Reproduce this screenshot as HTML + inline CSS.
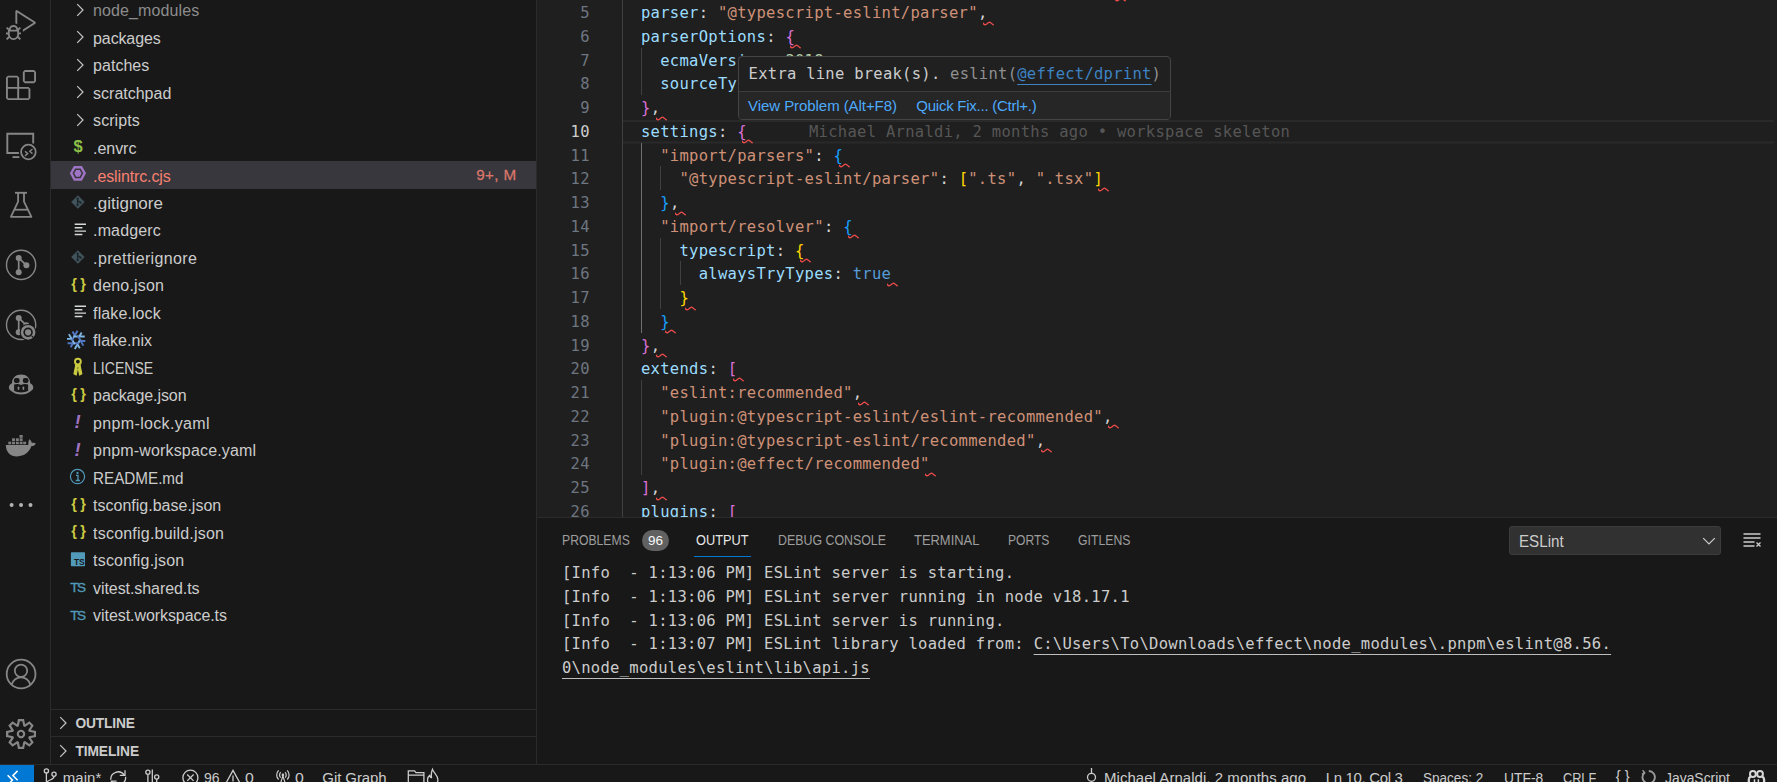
<!DOCTYPE html>
<html lang="en">
<head>
<meta charset="utf-8">
<title>.eslintrc.cjs - effect - Visual Studio Code</title>
<style>
*{box-sizing:border-box}
html,body{margin:0;padding:0}
body{width:1777px;height:782px;overflow:hidden;background:#181818;position:relative;
 font-family:"Liberation Sans",sans-serif;color:#cccccc;}
.abs{position:absolute}
/* activity bar */
#act{position:absolute;left:0;top:0;width:51px;height:764px;background:#181818;border-right:1px solid #2b2b2b}
#act svg{position:absolute;color:#868686}
/* sidebar */
#side{position:absolute;left:51px;top:0;width:485px;height:764px;background:#181818;overflow:hidden}
.row{position:absolute;left:0;width:485px;height:27.5px;line-height:27.5px;font-size:16px;color:#cccccc;white-space:nowrap}
.row.dim{color:#8c8c8c}
.row.sel{background:#37373d;color:#f88070;margin-top:-0.75px;height:28px;line-height:29px}
.row .chev{position:absolute;left:20.8px;top:5.15px;width:16px;height:16px;color:#c5c5c5}
.row.dim .chev{color:#c5c5c5}
.row .fi{position:absolute;left:15px;top:0;width:24px;height:27.5px;display:block}
.row .fi svg{position:absolute;left:0;top:0}
.row .nm{position:absolute;top:0.6px}
.row .badge{position:absolute;top:-0.9px;font-size:15.2px;color:#d8766a;-webkit-text-stroke:0.3px #d8766a}
.pane{position:absolute;left:0;width:485px;height:28px;border-top:1px solid #2b2b2b}
.pane svg{position:absolute;left:4.2px;width:16px;height:16px;color:#c5c5c5}
.pane div{position:absolute;height:20px;line-height:20px;font-weight:bold;font-size:13.75px;color:#cccccc;white-space:nowrap}
/* editor */
#ed{position:absolute;left:536px;top:0;width:1241px;height:517px;background:#1f1f1f;overflow:hidden;border-left:1px solid #2b2b2b}
#edin{position:absolute;left:-537px;top:0;width:1777px;height:517px}
.mono{font-family:"DejaVu Sans Mono","Liberation Mono",monospace;font-size:16px}
.cl{position:absolute;left:621.75px;height:23.75px;line-height:23.75px;white-space:pre;font-family:"DejaVu Sans Mono","Liberation Mono",monospace;font-size:15.5px;letter-spacing:0.293px;color:#d4d4d4;margin-top:2px}
.ln{position:absolute;left:537px;width:52.8px;text-align:right;height:23.75px;line-height:23.75px;font-family:"DejaVu Sans Mono","Liberation Mono",monospace;font-size:15.5px;letter-spacing:0.293px;color:#6e7681;margin-top:2px}
.ln.cur{color:#cccccc}
.k{color:#9cdcfe}.s{color:#ce9178}.p{color:#d4d4d4}.n{color:#b5cea8}.t{color:#569cd6}
.b1{color:#ffd700}.b2{color:#da70d6}.b3{color:#179fff}
.blame{color:#565656}
.guide{position:absolute;width:1px;background:#404040}
.guide.act{background:#707070}
.curline{position:absolute;left:623px;width:1151px;height:2px;background:#292929}
.curline2{position:absolute;left:623px;top:141px;width:1151px;height:3px;background:linear-gradient(#242424 0,#242424 33.3%,#292929 33.3%,#292929 66.6%,#242424 66.6%)}
.sq{position:absolute}
/* hover */
#hover{position:absolute;left:737.5px;top:56px;width:433.5px;height:63.5px;background:#202020;border:1px solid #454545;border-radius:4px}
#hover .msg{position:absolute;left:10.1px;top:5.9px;height:23.75px;line-height:23.75px;white-space:pre;font-family:"DejaVu Sans Mono","Liberation Mono",monospace;font-size:15.5px;letter-spacing:0.262px;color:#cccccc}
#hover .msg .src{color:#8f8f8f}
#hover .msg u{color:#3e83c3;text-decoration:underline;text-underline-offset:4.5px;text-decoration-thickness:1.2px}
#hover .bar{position:absolute;left:0;top:34px;width:431.5px;height:27.5px;border-top:1px solid #3c3c3c;background:#262626;border-radius:0 0 3px 3px;font-size:15px;color:#4daafc;line-height:27px;white-space:nowrap}
#hover .bar span{position:absolute;top:0}
/* panel */
#panel{position:absolute;left:537px;top:517px;width:1240px;height:247px;background:#181818;border-top:1px solid #2b2b2b}
.ptab{position:absolute;top:530.8px;height:20px;line-height:20px;font-size:13.75px;color:#9d9d9d;white-space:nowrap}
.ptab.act{color:#e7e7e7}
.pbadge{position:absolute;left:642px;top:529.5px;width:27px;height:21.5px;border-radius:11px;background:#616161;color:#f8f8f8;font-size:13.5px;line-height:21.5px;text-align:center}
.ol{position:absolute;left:562px;height:23.75px;line-height:23.75px;white-space:pre;font-family:"DejaVu Sans Mono","Liberation Mono",monospace;font-size:15.5px;letter-spacing:0.293px;color:#cccccc;margin-top:2px}
.ol u{text-decoration:underline;text-underline-offset:5px;text-decoration-thickness:1px;text-decoration-color:#bdbdbd;text-decoration-skip-ink:none}
#sel{position:absolute;left:1509px;top:526px;width:212px;height:29px;background:#313131;border:1px solid #3c3c3c;border-radius:3px;font-size:16.5px;color:#cccccc;line-height:27px}
#sel span{position:absolute;top:0.5px}
/* status */
#status{position:absolute;left:0;top:764px;width:1777px;height:18px;background:#181818;border-top:1px solid #2b2b2b;overflow:hidden;font-size:15px;color:#cccccc;white-space:nowrap}
#status .it{position:absolute;top:-1.3px;height:27.5px;line-height:27.5px}
#sticons{left:0;top:-1px}
#status svg{position:absolute}
#remote{position:absolute;left:0;top:-0.5px;width:33.8px;height:20px;background:#0078d4}
</style>
</head>
<body>
<div id="act">
<svg style="left:6px;top:9.5px;width:30px;height:30px" viewBox="0 0 24 24" fill="currentColor"><path d="M10.94 13.5l-1.32 1.32a3.73 3.73 0 0 0-7.24 0L1.06 13.5 0 14.56l1.72 1.72-.22.22V18H0v1.5h1.5v.08c.077.489.214.966.41 1.42L0 22.94 1.06 24l1.65-1.65A4.308 4.308 0 0 0 6 24a4.31 4.31 0 0 0 3.29-1.65L10.94 24 12 22.94 10.09 21c.198-.464.336-.951.41-1.45v-.1H12V18h-1.5v-1.5l-.22-.22L12 14.56l-1.06-1.06zM6 13.5a2.25 2.25 0 0 1 2.25 2.25h-4.500A2.250 2.250 0 0 1 6 13.500zm3 6a3.330 3.330 0 0 1-3 3 3.330 3.330 0 0 1-3-3v-2.250h6v2.250zm14.760-9.900v1.260L13.500 17.370V15.600l8.500-5.370L9 2v9.460a5.070 5.070 0 0 0-1.500-.720V.630L8.640 0l15.120 9.600z"/></svg>
<svg style="left:6px;top:70px;width:30px;height:30px" viewBox="0 0 24 24" fill="currentColor"><path fill-rule="evenodd" clip-rule="evenodd" d="M13.5 1.5L15 0h7.5L24 1.5V9l-1.5 1.5H15L13.5 9V1.5zm1.5 0V9h7.5V1.5H15zM0 15V6l1.500-1.500H9L10.500 6v7.500H18l1.500 1.500v7.500L18 24H1.500L0 22.500V15zm9-1.500V6H1.500v7.500H9zM9 15H1.500v7.500H9V15zm1.500 7.500H18V15h-7.500v7.500z"/></svg>
<svg style="left:0;top:0;width:50px;height:764px" viewBox="0 0 50 764" fill="none" stroke="currentColor"><path d="M18.9 153H7.3V133.7H33.2V143.6" stroke-width="1.9"/><path d="M12.5 157.1H19.4" stroke-width="1.9"/><circle cx="28.4" cy="152" r="7.3" stroke-width="1.8"/><path d="M25 151.3l2.7 2.3-2.700 2.300M32.500 149l-2.700 2.300 2.700 2.300" stroke-width="1.400"/><path d="M15 192.800H27" stroke-width="1.900"/><path d="M18.100 192.800V201.600L10.900 216.800H31.400L24 201.600V192.800" stroke-width="1.800" stroke-linejoin="round"/><path d="M14.600 209.700H27.700" stroke-width="1.800"/><circle cx="21.100" cy="264.900" r="14.600" stroke-width="1.400"/><path d="M18.700 257.900V272.300M18.700 257.900L26.400 265.300" stroke-width="1.700"/><g fill="currentColor" stroke="none"><circle cx="18.700" cy="257.900" r="3"/><circle cx="18.700" cy="272.300" r="3"/><circle cx="26.400" cy="265.300" r="3"/></g><circle cx="21.100" cy="324.900" r="14.600" stroke-width="1.400"/><path d="M18.700 317.900V332.300M18.700 317.900L26.400 325.300" stroke-width="1.700"/><g fill="currentColor" stroke="none"><circle cx="18.700" cy="317.900" r="3"/><circle cx="18.700" cy="332.300" r="3"/><circle cx="26.400" cy="325.300" r="3"/></g><circle cx="28.100" cy="332.300" r="8.400" fill="#181818" stroke="none"/><circle cx="28.100" cy="332.300" r="6.050" stroke-width="2.600"/><circle cx="28.100" cy="332.300" r="3.100" fill="currentColor" stroke="none"/><path d="M31.700 335.900l1.800 1.800" stroke="#181818" stroke-width="1.200"/><g stroke="none"><path fill="currentColor" d="M21.100 374.600c-5.400 0-8.800 2.900-9.100 8.600-1.900.900-3.100 2.300-3.100 4.300 0 1.600.900 2.700 2.300 3.500 2.800 2.300 6.100 3.600 9.900 3.600s7.100-1.300 9.900-3.600c1.400-.800 2.300-1.900 2.300-3.500 0-2-1.200-3.400-3.100-4.300-.300-5.700-3.700-8.600-9.100-8.600z"/><rect x="13.900" y="377.900" width="5.700" height="5.100" rx="2" fill="#181818"/><rect x="22.800" y="377.900" width="5.700" height="5.100" rx="2" fill="#181818"/><path fill="#181818" d="M14.100 384.400c2.300-.800 4.900-.700 7 .500 2.100-1.200 4.700-1.300 7-.500v6.400c-2 1.100-4.400 1.700-7 1.700s-5-.600-7-1.700z"/><rect x="17.700" y="386.400" width="1.600" height="3.700" rx=".8" fill="currentColor"/><rect x="22.600" y="386.400" width="1.600" height="3.700" rx=".8" fill="currentColor"/></g><g stroke="none" fill="currentColor"><path d="M5.750 444.900H28.200c.300-2 .100-4 1.200-5.700 1.300 1 2.200 2.300 2.500 3.700 1.400-.500 2.800-.300 3.900.500-.700 1.600-2.200 2.600-4.300 2.700-2.400 6.300-7.100 10.300-14.500 10.300-6.900 0-10.800-4.200-11.250-11.500z"/><g opacity=".92"><rect x="8.3" y="441.700" width="2.900" height="2.600"/><rect x="12.05" y="441.700" width="2.900" height="2.600"/><rect x="15.9" y="441.700" width="2.900" height="2.600"/><rect x="19.7" y="441.700" width="2.900" height="2.600"/><rect x="23.2" y="441.700" width="2.900" height="2.600"/><rect x="12.05" y="438.300" width="2.900" height="2.700"/><rect x="15.9" y="438.300" width="2.900" height="2.700"/><rect x="19.7" y="438.300" width="2.900" height="2.700"/><rect x="19.500" y="435" width="3.200" height="2.800"/></g></g><g stroke="none" fill="#b4b4b4"><circle cx="11.600" cy="504.900" r="2"/><circle cx="21.050" cy="504.900" r="2"/><circle cx="30.500" cy="504.900" r="2"/></g><circle cx="21.100" cy="674" r="14.400" stroke-width="1.800"/><circle cx="21" cy="670.800" r="6.200" stroke-width="1.800"/><path d="M11.600 684.600c1.600-4.600 5.200-7.300 9.400-7.300s7.800 2.700 9.400 7.300" stroke-width="1.800"/></svg>
<svg style="left:6px;top:719.1px;width:30px;height:30px" viewBox="0 0 24 24" fill="currentColor"><path fill-rule="evenodd" clip-rule="evenodd" d="M19.85 8.75l4.15.83v4.84l-4.15.83 2.35 3.52-3.43 3.43-3.52-2.35-.83 4.15H9.580l-.830-4.150-3.520 2.350-3.430-3.430 2.350-3.520L0 14.420V9.580l4.150-.830L1.800 5.230 5.230 1.800l3.520 2.350L9.580 0h4.840l.830 4.150 3.520-2.350 3.430 3.430-2.350 3.520zm-1.570 5.070l4-.810v-2l-4-.810-.540-1.300 2.290-3.430-1.430-1.430-3.430 2.290-1.300-.540-.810-4h-2l-.810 4-1.300.540-3.430-2.290-1.430 1.430L6.380 8.900l-.540 1.300-4 .810v2l4 .810.540 1.300-2.290 3.430 1.430 1.430 3.430-2.290 1.300.540.810 4h2l.810-4 1.300-.540 3.430 2.290 1.430-1.430-2.290-3.430.540-1.300zm-8.186-4.672A3.430 3.430 0 0 1 12 8.570 3.440 3.440 0 0 1 15.430 12a3.430 3.430 0 1 1-5.336-2.852zm.956 4.274c.281.188.612.288.950.288A1.700 1.700 0 0 0 13.710 12a1.710 1.710 0 1 0-2.660 1.422z"/></svg>
</div>
<div id="side">
<div class="row dim" style="top:-3.25px"><svg class="chev" viewBox="0 0 16 16"><path d="M5.2 2.2 L11 8 L5.2 13.8" fill="none" stroke="currentColor" stroke-width="1.2"/></svg><span class="nm" style="left:42.10px;letter-spacing:0.103px;">node_modules</span></div>
<div class="row" style="top:24.25px"><svg class="chev" viewBox="0 0 16 16"><path d="M5.2 2.2 L11 8 L5.2 13.8" fill="none" stroke="currentColor" stroke-width="1.2"/></svg><span class="nm" style="left:42.10px;letter-spacing:-0.129px;">packages</span></div>
<div class="row" style="top:51.75px"><svg class="chev" viewBox="0 0 16 16"><path d="M5.2 2.2 L11 8 L5.2 13.8" fill="none" stroke="currentColor" stroke-width="1.2"/></svg><span class="nm" style="left:42.10px;letter-spacing:0.026px;">patches</span></div>
<div class="row" style="top:79.25px"><svg class="chev" viewBox="0 0 16 16"><path d="M5.2 2.2 L11 8 L5.2 13.8" fill="none" stroke="currentColor" stroke-width="1.2"/></svg><span class="nm" style="left:42.10px;letter-spacing:-0.007px;">scratchpad</span></div>
<div class="row" style="top:106.75px"><svg class="chev" viewBox="0 0 16 16"><path d="M5.2 2.2 L11 8 L5.2 13.8" fill="none" stroke="currentColor" stroke-width="1.2"/></svg><span class="nm" style="left:42.10px;letter-spacing:0.061px;">scripts</span></div>
<div class="row" style="top:134.25px"><span class="fi"><svg width="24" height="27.5" viewBox="0 0 24 27.5"><text x="7.6" y="17.6" font-family="Liberation Sans,sans-serif" font-weight="bold" font-size="16.5" fill="#8dc149">$</text></svg></span><span class="nm" style="left:42.10px;letter-spacing:-0.056px;">.envrc</span></div>
<div class="row sel" style="top:161.75px"><span class="fi"><svg width="24" height="27.5" viewBox="0 0 24 27.5"><polygon points="3.80,12.30 7.85,4.95 15.95,4.95 20.00,12.30 15.95,19.65 7.85,19.65" fill="#a074c4"/><polygon points="7.40,12.30 9.65,8.20 14.15,8.20 16.40,12.30 14.15,16.40 9.65,16.40" fill="none" stroke="#37373d" stroke-width="1.5"/></svg></span><span class="nm" style="left:42.10px;letter-spacing:-0.127px;">.eslintrc.cjs</span><span class="badge" style="left:425.30px;letter-spacing:0.370px;">9+, M</span></div>
<div class="row" style="top:189.25px"><span class="fi"><svg width="24" height="27.5" viewBox="0 0 24 27.5"><path d="M11.9 6.2 L18.6 12.95 L11.9 19.7 L5.2 12.95 Z" fill="#41535b"/><path d="M11.6 9.600v6.400M11.800 11.600l2.600 2" stroke="#1c2428" stroke-width="1.300" fill="none"/><circle cx="11.600" cy="9.600" r="1.100" fill="#1c2428"/><circle cx="11.600" cy="16.200" r="1.100" fill="#1c2428"/><circle cx="14.600" cy="13.700" r="1.100" fill="#1c2428"/></svg></span><span class="nm" style="left:42.10px;transform:scaleX(1.0619);transform-origin:0 50%;">.gitignore</span></div>
<div class="row" style="top:216.75px"><span class="fi"><svg width="24" height="27.5" viewBox="0 0 24 27.5"><path d="M8.700 7.300h11.300M8.700 10.700h7.700M8.700 14.100h11.300M8.700 17.500h7.700" stroke="#d4d7d6" stroke-width="1.400"/></svg></span><span class="nm" style="left:42.10px;letter-spacing:0.128px;">.madgerc</span></div>
<div class="row" style="top:244.25px"><span class="fi"><svg width="24" height="27.5" viewBox="0 0 24 27.5"><path d="M11.9 6.2 L18.6 12.95 L11.9 19.7 L5.2 12.95 Z" fill="#41535b"/><path d="M11.6 9.600v6.400M11.800 11.600l2.600 2" stroke="#1c2428" stroke-width="1.300" fill="none"/><circle cx="11.600" cy="9.600" r="1.100" fill="#1c2428"/><circle cx="11.600" cy="16.200" r="1.100" fill="#1c2428"/><circle cx="14.600" cy="13.700" r="1.100" fill="#1c2428"/></svg></span><span class="nm" style="left:42.10px;letter-spacing:0.363px;">.prettierignore</span></div>
<div class="row" style="top:271.75px"><span class="fi"><svg width="24" height="27.5" viewBox="0 0 24 27.5"><text x="5.300" y="16.800" font-family="Liberation Sans,sans-serif" font-weight="bold" font-size="14.500" fill="#cbcb41" letter-spacing="3.300">{}</text></svg></span><span class="nm" style="left:42.10px;letter-spacing:0.189px;">deno.json</span></div>
<div class="row" style="top:299.25px"><span class="fi"><svg width="24" height="27.5" viewBox="0 0 24 27.5"><path d="M8.700 7.300h11.300M8.700 10.700h7.700M8.700 14.100h11.300M8.700 17.500h7.700" stroke="#d4d7d6" stroke-width="1.400"/></svg></span><span class="nm" style="left:42.10px;letter-spacing:0.100px;">flake.lock</span></div>
<div class="row" style="top:326.75px"><span class="fi"><svg width="24" height="27.5" viewBox="0 0 24 27.5"><g fill="none" stroke-width="1.9"><path d="M14.59 12.00L8.79 22.05M11.49 17.37L13.79 21.35" stroke="#7eb6e0"/><path d="M13.15 16.30L1.55 16.30M6.95 16.30L4.65 20.28" stroke="#5277c3"/><path d="M8.71 17.20L2.91 7.15M5.61 11.83L1.01 11.83" stroke="#7eb6e0"/><path d="M5.71 13.80L11.51 3.75M8.81 8.43L6.51 4.45" stroke="#5277c3"/><path d="M7.15 9.50L18.75 9.50M13.35 9.50L15.65 5.52" stroke="#7eb6e0"/><path d="M11.59 8.60L17.39 18.65M14.69 13.97L19.29 13.97" stroke="#5277c3"/></g></svg></span><span class="nm" style="left:42.10px;letter-spacing:0.025px;">flake.nix</span></div>
<div class="row" style="top:354.25px"><span class="fi"><svg width="24" height="27.5" viewBox="0 0 24 27.5"><circle cx="11.900" cy="7.600" r="2.900" fill="none" stroke="#cbcb41" stroke-width="2"/><path d="M9.900 10.600L8 19.800l2.200 1.200 1.100-5.600zM13.900 10.600l1.900 9.200-2.200 1.200-1.100-5.600z" fill="#cbcb41" stroke="#cbcb41" stroke-width="1.200" stroke-linejoin="round"/><path d="M9.600 10.200h4.600v3.400h-4.600z" fill="#cbcb41"/></svg></span><span class="nm" style="left:42.10px;transform:scaleX(0.8792);transform-origin:0 50%;">LICENSE</span></div>
<div class="row" style="top:381.75px"><span class="fi"><svg width="24" height="27.5" viewBox="0 0 24 27.5"><text x="5.300" y="16.800" font-family="Liberation Sans,sans-serif" font-weight="bold" font-size="14.500" fill="#cbcb41" letter-spacing="3.300">{}</text></svg></span><span class="nm" style="left:42.10px;letter-spacing:-0.072px;">package.json</span></div>
<div class="row" style="top:409.25px"><span class="fi"><svg width="24" height="27.5" viewBox="0 0 24 27.5"><text x="8.500" y="19.200" font-family="Liberation Sans,sans-serif" font-weight="bold" font-style="italic" font-size="18.500" fill="#a074c4">!</text></svg></span><span class="nm" style="left:42.10px;letter-spacing:0.336px;">pnpm-lock.yaml</span></div>
<div class="row" style="top:436.75px"><span class="fi"><svg width="24" height="27.5" viewBox="0 0 24 27.5"><text x="8.500" y="19.200" font-family="Liberation Sans,sans-serif" font-weight="bold" font-style="italic" font-size="18.500" fill="#a074c4">!</text></svg></span><span class="nm" style="left:42.10px;letter-spacing:0.163px;">pnpm-workspace.yaml</span></div>
<div class="row" style="top:464.25px"><span class="fi"><svg width="24" height="27.5" viewBox="0 0 24 27.5"><circle cx="11.500" cy="12.550" r="7.100" fill="none" stroke="#519aba" stroke-width="1.200"/><path d="M10 11.300h2v5M9.700 16.500h4.200" stroke="#519aba" stroke-width="1.300" fill="none"/><circle cx="11.500" cy="8.900" r="1.100" fill="#519aba"/></svg></span><span class="nm" style="left:42.10px;transform:scaleX(0.9514);transform-origin:0 50%;">README.md</span></div>
<div class="row" style="top:491.75px"><span class="fi"><svg width="24" height="27.5" viewBox="0 0 24 27.5"><text x="5.300" y="16.800" font-family="Liberation Sans,sans-serif" font-weight="bold" font-size="14.500" fill="#cbcb41" letter-spacing="3.300">{}</text></svg></span><span class="nm" style="left:42.10px;letter-spacing:0.001px;">tsconfig.base.json</span></div>
<div class="row" style="top:519.25px"><span class="fi"><svg width="24" height="27.5" viewBox="0 0 24 27.5"><text x="5.300" y="16.800" font-family="Liberation Sans,sans-serif" font-weight="bold" font-size="14.500" fill="#cbcb41" letter-spacing="3.300">{}</text></svg></span><span class="nm" style="left:42.10px;letter-spacing:0.206px;">tsconfig.build.json</span></div>
<div class="row" style="top:546.75px"><span class="fi"><svg width="24" height="27.5" viewBox="0 0 24 27.5"><rect x="4.900" y="5.250" width="14.100" height="14" rx=".8" fill="#519aba"/><text x="8" y="18.300" font-family="Liberation Sans,sans-serif" font-weight="bold" font-size="8.500" fill="#181818" letter-spacing="-.300">TS</text></svg></span><span class="nm" style="left:42.10px;letter-spacing:0.180px;">tsconfig.json</span></div>
<div class="row" style="top:574.25px"><span class="fi"><svg width="24" height="27.5" viewBox="0 0 24 27.5"><text x="4.300" y="17.750" font-family="Liberation Sans,sans-serif" font-size="13.600" fill="#519aba" stroke="#519aba" stroke-width=".350" letter-spacing="-1.700">TS</text></svg></span><span class="nm" style="left:42.10px;letter-spacing:-0.074px;">vitest.shared.ts</span></div>
<div class="row" style="top:601.75px"><span class="fi"><svg width="24" height="27.5" viewBox="0 0 24 27.5"><text x="4.300" y="17.750" font-family="Liberation Sans,sans-serif" font-size="13.600" fill="#519aba" stroke="#519aba" stroke-width=".350" letter-spacing="-1.700">TS</text></svg></span><span class="nm" style="left:42.10px;letter-spacing:-0.070px;">vitest.workspace.ts</span></div>
<div class="pane" style="top:709px"><svg viewBox="0 0 16 16" style="top:5.00px"><path d="M5.2 2.2 L11 8 L5.2 13.8" fill="none" stroke="currentColor" stroke-width="1.2"/></svg><div style="left:24.40px;letter-spacing:-0.143px;top:4.26px">OUTLINE</div></div>
<div class="pane" style="top:736px"><svg viewBox="0 0 16 16" style="top:5.60px"><path d="M5.2 2.2 L11 8 L5.2 13.8" fill="none" stroke="currentColor" stroke-width="1.2"/></svg><div style="left:24.40px;letter-spacing:-0.067px;top:4.86px">TIMELINE</div></div>
</div>
<div id="ed"><div id="edin">
<div class="curline" style="top:120px"></div><div class="curline2"></div>
<div class="guide" style="left:622px;top:-23.62px;height:570.00px"></div>
<div class="guide" style="left:641px;top:47.62px;height:47.50px"></div>
<div class="guide act" style="left:641px;top:142.62px;height:190.00px"></div>
<div class="guide" style="left:660px;top:166.38px;height:23.75px"></div>
<div class="guide" style="left:660px;top:237.62px;height:71.25px"></div>
<div class="guide" style="left:680px;top:261.38px;height:23.75px"></div>
<div class="guide" style="left:641px;top:380.12px;height:95.00px"></div>
<svg class="sq" style="left:1115.20px;top:-3.25px" width="11" height="5" viewBox="0 0 11 5"><path d="M0.3 2.2 C1 4 2.6 4.3 3.9 2.9 S6.3 0.5 7.4 1.4 S9.3 3.3 10.3 3.8" fill="none" stroke="#f14c4c" stroke-width="1.35" stroke-linecap="round"/></svg>
<div class="ln" style="top:0.125px">5</div>
<div class="cl" style="top:0.125px"><span class="k">  parser</span><span class="p">: </span><span class="s">&quot;@typescript-eslint/parser&quot;</span><span class="p">,</span></div>
<svg class="sq" style="left:982.90px;top:20.50px" width="11" height="5" viewBox="0 0 11 5"><path d="M0.3 2.2 C1 4 2.6 4.3 3.9 2.9 S6.3 0.5 7.4 1.4 S9.3 3.3 10.3 3.8" fill="none" stroke="#f14c4c" stroke-width="1.35" stroke-linecap="round"/></svg>
<div class="ln" style="top:23.875px">6</div>
<div class="cl" style="top:23.875px"><span class="k">  parserOptions</span><span class="p">: </span><span class="b2">{</span></div>
<svg class="sq" style="left:790.40px;top:44.25px" width="11" height="5" viewBox="0 0 11 5"><path d="M0.3 2.2 C1 4 2.6 4.3 3.9 2.9 S6.3 0.5 7.4 1.4 S9.3 3.3 10.3 3.8" fill="none" stroke="#f14c4c" stroke-width="1.35" stroke-linecap="round"/></svg>
<div class="ln" style="top:47.625px">7</div>
<div class="cl" style="top:47.625px"><span class="k">    ecmaVersion</span><span class="p">: </span><span class="n">2018</span><span class="p">,</span></div>
<svg class="sq" style="left:828.90px;top:68.00px" width="11" height="5" viewBox="0 0 11 5"><path d="M0.3 2.2 C1 4 2.6 4.3 3.9 2.9 S6.3 0.5 7.4 1.4 S9.3 3.3 10.3 3.8" fill="none" stroke="#f14c4c" stroke-width="1.35" stroke-linecap="round"/></svg>
<div class="ln" style="top:71.375px">8</div>
<div class="cl" style="top:71.375px"><span class="k">    sourceType</span><span class="p">: </span><span class="s">&quot;module&quot;</span></div>
<svg class="sq" style="left:848.15px;top:91.75px" width="11" height="5" viewBox="0 0 11 5"><path d="M0.3 2.2 C1 4 2.6 4.3 3.9 2.9 S6.3 0.5 7.4 1.4 S9.3 3.3 10.3 3.8" fill="none" stroke="#f14c4c" stroke-width="1.35" stroke-linecap="round"/></svg>
<div class="ln" style="top:95.125px">9</div>
<div class="cl" style="top:95.125px"><span class="b2">  }</span><span class="p">,</span></div>
<svg class="sq" style="left:655.65px;top:115.50px" width="11" height="5" viewBox="0 0 11 5"><path d="M0.3 2.2 C1 4 2.6 4.3 3.9 2.9 S6.3 0.5 7.4 1.4 S9.3 3.3 10.3 3.8" fill="none" stroke="#f14c4c" stroke-width="1.35" stroke-linecap="round"/></svg>
<div class="ln cur" style="top:118.875px">10</div>
<div class="cl" style="top:118.875px"><span class="k">  settings</span><span class="p">: </span><span class="b2">{</span></div>
<svg class="sq" style="left:742.27px;top:139.25px" width="11" height="5" viewBox="0 0 11 5"><path d="M0.3 2.2 C1 4 2.6 4.3 3.9 2.9 S6.3 0.5 7.4 1.4 S9.3 3.3 10.3 3.8" fill="none" stroke="#f14c4c" stroke-width="1.35" stroke-linecap="round"/></svg>
<div class="ln" style="top:142.625px">11</div>
<div class="cl" style="top:142.625px"><span class="s">    &quot;import/parsers&quot;</span><span class="p">: </span><span class="b3">{</span></div>
<svg class="sq" style="left:838.52px;top:163.00px" width="11" height="5" viewBox="0 0 11 5"><path d="M0.3 2.2 C1 4 2.6 4.3 3.9 2.9 S6.3 0.5 7.4 1.4 S9.3 3.3 10.3 3.8" fill="none" stroke="#f14c4c" stroke-width="1.35" stroke-linecap="round"/></svg>
<div class="ln" style="top:166.375px">12</div>
<div class="cl" style="top:166.375px"><span class="s">      &quot;@typescript-eslint/parser&quot;</span><span class="p">: </span><span class="b1">[</span><span class="s">&quot;.ts&quot;</span><span class="p">, </span><span class="s">&quot;.tsx&quot;</span><span class="b1">]</span></div>
<svg class="sq" style="left:1098.40px;top:186.75px" width="11" height="5" viewBox="0 0 11 5"><path d="M0.3 2.2 C1 4 2.6 4.3 3.9 2.9 S6.3 0.5 7.4 1.4 S9.3 3.3 10.3 3.8" fill="none" stroke="#f14c4c" stroke-width="1.35" stroke-linecap="round"/></svg>
<div class="ln" style="top:190.125px">13</div>
<div class="cl" style="top:190.125px"><span class="b3">    }</span><span class="p">,</span></div>
<svg class="sq" style="left:674.90px;top:210.50px" width="11" height="5" viewBox="0 0 11 5"><path d="M0.3 2.2 C1 4 2.6 4.3 3.9 2.9 S6.3 0.5 7.4 1.4 S9.3 3.3 10.3 3.8" fill="none" stroke="#f14c4c" stroke-width="1.35" stroke-linecap="round"/></svg>
<div class="ln" style="top:213.875px">14</div>
<div class="cl" style="top:213.875px"><span class="s">    &quot;import/resolver&quot;</span><span class="p">: </span><span class="b3">{</span></div>
<svg class="sq" style="left:848.15px;top:234.25px" width="11" height="5" viewBox="0 0 11 5"><path d="M0.3 2.2 C1 4 2.6 4.3 3.9 2.9 S6.3 0.5 7.4 1.4 S9.3 3.3 10.3 3.8" fill="none" stroke="#f14c4c" stroke-width="1.35" stroke-linecap="round"/></svg>
<div class="ln" style="top:237.625px">15</div>
<div class="cl" style="top:237.625px"><span class="k">      typescript</span><span class="p">: </span><span class="b1">{</span></div>
<svg class="sq" style="left:800.02px;top:258.00px" width="11" height="5" viewBox="0 0 11 5"><path d="M0.3 2.2 C1 4 2.6 4.3 3.9 2.9 S6.3 0.5 7.4 1.4 S9.3 3.3 10.3 3.8" fill="none" stroke="#f14c4c" stroke-width="1.35" stroke-linecap="round"/></svg>
<div class="ln" style="top:261.375px">16</div>
<div class="cl" style="top:261.375px"><span class="k">        alwaysTryTypes</span><span class="p">: </span><span class="t">true</span></div>
<svg class="sq" style="left:886.65px;top:281.75px" width="11" height="5" viewBox="0 0 11 5"><path d="M0.3 2.2 C1 4 2.6 4.3 3.9 2.9 S6.3 0.5 7.4 1.4 S9.3 3.3 10.3 3.8" fill="none" stroke="#f14c4c" stroke-width="1.35" stroke-linecap="round"/></svg>
<div class="ln" style="top:285.125px">17</div>
<div class="cl" style="top:285.125px"><span class="b1">      }</span></div>
<svg class="sq" style="left:684.52px;top:305.50px" width="11" height="5" viewBox="0 0 11 5"><path d="M0.3 2.2 C1 4 2.6 4.3 3.9 2.9 S6.3 0.5 7.4 1.4 S9.3 3.3 10.3 3.8" fill="none" stroke="#f14c4c" stroke-width="1.35" stroke-linecap="round"/></svg>
<div class="ln" style="top:308.875px">18</div>
<div class="cl" style="top:308.875px"><span class="b3">    }</span></div>
<svg class="sq" style="left:665.27px;top:329.25px" width="11" height="5" viewBox="0 0 11 5"><path d="M0.3 2.2 C1 4 2.6 4.3 3.9 2.9 S6.3 0.5 7.4 1.4 S9.3 3.3 10.3 3.8" fill="none" stroke="#f14c4c" stroke-width="1.35" stroke-linecap="round"/></svg>
<div class="ln" style="top:332.625px">19</div>
<div class="cl" style="top:332.625px"><span class="b2">  }</span><span class="p">,</span></div>
<svg class="sq" style="left:655.65px;top:353.00px" width="11" height="5" viewBox="0 0 11 5"><path d="M0.3 2.2 C1 4 2.6 4.3 3.9 2.9 S6.3 0.5 7.4 1.4 S9.3 3.3 10.3 3.8" fill="none" stroke="#f14c4c" stroke-width="1.35" stroke-linecap="round"/></svg>
<div class="ln" style="top:356.375px">20</div>
<div class="cl" style="top:356.375px"><span class="k">  extends</span><span class="p">: </span><span class="b2">[</span></div>
<svg class="sq" style="left:732.65px;top:376.75px" width="11" height="5" viewBox="0 0 11 5"><path d="M0.3 2.2 C1 4 2.6 4.3 3.9 2.9 S6.3 0.5 7.4 1.4 S9.3 3.3 10.3 3.8" fill="none" stroke="#f14c4c" stroke-width="1.35" stroke-linecap="round"/></svg>
<div class="ln" style="top:380.125px">21</div>
<div class="cl" style="top:380.125px"><span class="s">    &quot;eslint:recommended&quot;</span><span class="p">,</span></div>
<svg class="sq" style="left:857.77px;top:400.50px" width="11" height="5" viewBox="0 0 11 5"><path d="M0.3 2.2 C1 4 2.6 4.3 3.9 2.9 S6.3 0.5 7.4 1.4 S9.3 3.3 10.3 3.8" fill="none" stroke="#f14c4c" stroke-width="1.35" stroke-linecap="round"/></svg>
<div class="ln" style="top:403.875px">22</div>
<div class="cl" style="top:403.875px"><span class="s">    &quot;plugin:@typescript-eslint/eslint-recommended&quot;</span><span class="p">,</span></div>
<svg class="sq" style="left:1108.03px;top:424.25px" width="11" height="5" viewBox="0 0 11 5"><path d="M0.3 2.2 C1 4 2.6 4.3 3.9 2.9 S6.3 0.5 7.4 1.4 S9.3 3.3 10.3 3.8" fill="none" stroke="#f14c4c" stroke-width="1.35" stroke-linecap="round"/></svg>
<div class="ln" style="top:427.625px">23</div>
<div class="cl" style="top:427.625px"><span class="s">    &quot;plugin:@typescript-eslint/recommended&quot;</span><span class="p">,</span></div>
<svg class="sq" style="left:1040.65px;top:448.00px" width="11" height="5" viewBox="0 0 11 5"><path d="M0.3 2.2 C1 4 2.6 4.3 3.9 2.9 S6.3 0.5 7.4 1.4 S9.3 3.3 10.3 3.8" fill="none" stroke="#f14c4c" stroke-width="1.35" stroke-linecap="round"/></svg>
<div class="ln" style="top:451.375px">24</div>
<div class="cl" style="top:451.375px"><span class="s">    &quot;plugin:@effect/recommended&quot;</span></div>
<svg class="sq" style="left:925.15px;top:471.75px" width="11" height="5" viewBox="0 0 11 5"><path d="M0.3 2.2 C1 4 2.6 4.3 3.9 2.9 S6.3 0.5 7.4 1.4 S9.3 3.3 10.3 3.8" fill="none" stroke="#f14c4c" stroke-width="1.35" stroke-linecap="round"/></svg>
<div class="ln" style="top:475.125px">25</div>
<div class="cl" style="top:475.125px"><span class="b2">  ]</span><span class="p">,</span></div>
<svg class="sq" style="left:655.65px;top:495.50px" width="11" height="5" viewBox="0 0 11 5"><path d="M0.3 2.2 C1 4 2.6 4.3 3.9 2.9 S6.3 0.5 7.4 1.4 S9.3 3.3 10.3 3.8" fill="none" stroke="#f14c4c" stroke-width="1.35" stroke-linecap="round"/></svg>
<div class="ln" style="top:498.875px">26</div>
<div class="cl" style="top:498.875px"><span class="k">  plugins</span><span class="p">: </span><span class="b2">[</span></div>
<svg class="sq" style="left:732.65px;top:519.25px" width="11" height="5" viewBox="0 0 11 5"><path d="M0.3 2.2 C1 4 2.6 4.3 3.9 2.9 S6.3 0.5 7.4 1.4 S9.3 3.3 10.3 3.8" fill="none" stroke="#f14c4c" stroke-width="1.35" stroke-linecap="round"/></svg>
<div class="cl blame" style="top:118.875px;left:809px">Michael Arnaldi, 2 months ago • workspace skeleton</div>
<div id="hover">
<div class="msg">Extra line break(s). <span class="src">eslint(<u>@effect/dprint</u>)</span></div>
<div class="bar"><span style="left:9.60px;letter-spacing:-0.065px;">View Problem (Alt+F8)</span><span style="left:177.80px;letter-spacing:-0.251px;">Quick Fix... (Ctrl+.)</span></div>
</div>
</div></div>
<div id="panel"></div>
<div class="abs" style="left:536px;top:0;width:1px;height:764px;background:#2b2b2b"></div>
<div class="ptab" style="left:561.90px;transform:scaleX(0.8872);transform-origin:0 50%;">PROBLEMS</div>
<div class="ptab act" style="left:695.80px;transform:scaleX(0.9287);transform-origin:0 50%;">OUTPUT</div>
<div class="ptab" style="left:777.70px;transform:scaleX(0.9002);transform-origin:0 50%;">DEBUG CONSOLE</div>
<div class="ptab" style="left:914.30px;transform:scaleX(0.9406);transform-origin:0 50%;">TERMINAL</div>
<div class="ptab" style="left:1008.30px;transform:scaleX(0.8785);transform-origin:0 50%;">PORTS</div>
<div class="ptab" style="left:1078.30px;transform:scaleX(0.8905);transform-origin:0 50%;">GITLENS</div>
<div class="pbadge">96</div>
<div class="abs" style="left:694px;top:555.5px;width:57px;height:1.5px;background:#0078d4"></div>
<div id="sel"><span style="left:9.00px;transform:scaleX(0.9185);transform-origin:0 50%;">ESLint</span><svg class="abs" style="left:190.5px;top:6px" width="16" height="16" viewBox="0 0 16 16"><path d="M2.2 5.2 L8 11 L13.8 5.2" fill="none" stroke="#cccccc" stroke-width="1.2"/></svg></div>
<svg class="abs" style="left:1742px;top:531px" width="20" height="18" viewBox="0 0 20 18"><path d="M1.5 3h17M1.5 7h17M1.5 11h11M1.5 15h11" stroke="#cccccc" stroke-width="1.3" fill="none"/><path d="M14.5 11.5l4 4M18.5 11.5l-4 4" stroke="#cccccc" stroke-width="1.3" fill="none"/></svg>
<div class="ol" style="top:560.125px">[Info  - 1:13:06 PM] ESLint server is starting.</div>
<div class="ol" style="top:583.875px">[Info  - 1:13:06 PM] ESLint server running in node v18.17.1</div>
<div class="ol" style="top:607.625px">[Info  - 1:13:06 PM] ESLint server is running.</div>
<div class="ol" style="top:631.375px">[Info  - 1:13:07 PM] ESLint library loaded from: <u>C:\Users\To\Downloads\effect\node_modules\.pnpm\eslint@8.56.</u></div>
<div class="ol" style="top:655.125px"><u>0\node_modules\eslint\lib\api.js</u></div>
<div id="status">
<div id="remote"></div>
<svg id="sticons" viewBox="0 764 1777 18" width="1777" height="18" fill="none" stroke="#cccccc" stroke-width="1.3">
<g stroke="#ffffff" stroke-width="1.5"><path d="M17.6 770.9L12.9 775.6L17.6 780.3"/><path d="M7.6 775.2L12.5 780.1L7.6 785"/></g>
<!-- branch -->
<circle cx="46.4" cy="770.9" r="2.1"/><circle cx="54" cy="774.3" r="2.1"/><path d="M46.4 773V786M54 776.4c0 4.2-7.6 3-7.600 7"/>
<!-- sync -->
<path d="M110.800 779.800a7.300 7.300 0 0 1 13.400-4.600M125.600 776.800a7.300 7.300 0 0 1-13.400 4.600"/><path d="M125 770.200v5.200h-5.200M111.400 786v-4.800h5.200"/>
<!-- compare -->
<circle cx="147.900" cy="772.300" r="2.100"/><path d="M147.900 774.400V786M152.300 769.600V786M156.700 779.100V786"/><circle cx="156.700" cy="777" r="2.100"/>
<!-- error -->
<circle cx="190.400" cy="777.700" r="7.500"/><path d="M187.200 774.500l6.400 6.400M193.600 774.500l-6.400 6.400"/>
<!-- warning -->
<path d="M233 770.400L241.600 786H224.400Z"/><path d="M233 775.500V781.500"/>
<!-- radio tower -->
<path d="M278.600 770.300a6.500 6.500 0 0 0 0 9.200M287.200 770.300a6.500 6.500 0 0 1 0 9.200M280.700 772.200a3.800 3.800 0 0 0 0 5.400M285.100 772.200a3.800 3.800 0 0 1 0 5.400" stroke-width="1.200"/><circle cx="282.900" cy="774.900" r="1.300" fill="#cccccc" stroke="none"/><path d="M282.900 776L279.600 786M282.900 776L286.200 786M280.800 782.500h4.200" stroke-width="1.200"/>
<!-- folder -->
<path d="M408.300 786V770.900h6.200l1.500 1.800h7.900V786M408.300 775.200h15.600"/>
<!-- flame -->
<path d="M432.500 769.300c.800 3.400 5.400 5.400 5.400 10.600a5.200 5.200 0 0 1-10.400 0c0-2.300 1.100-3.700 2.200-4.500.300 1.500 1 2.300 1.800 2.300-.300-3.100-.500-5.700 1-8.400z"/>
<!-- commit -->
<circle cx="1091.500" cy="777.300" r="4"/><path d="M1091.500 768V773.300M1091.500 781.300V786"/>
<!-- spinner -->
<g stroke="#9a9a9a" stroke-width="1.900"><path d="M1644.400 772.700a6.200 6.200 0 1 0 4.400-1.700"/><path d="M1642.600 770.300l2.100 2.500-2.800 1.400" stroke-width="1.400"/></g>
<!-- copilot -->
<g stroke="#d6d6d6" stroke-width="2" fill="none"><circle cx="1752.900" cy="774" r="2.900"/><circle cx="1760" cy="774" r="2.900"/><path d="M1750.600 776.600c-1.300.800-1.800 1.700-1.800 3.200V786M1762.300 776.600c1.300.800 1.800 1.700 1.800 3.200V786" stroke-width="2.300"/><path d="M1754.500 779.200V786M1758.400 779.200V786" stroke-width="1.500"/></g>
</svg>
<div class="it" style="left:1615.800px;letter-spacing:4.200px;font-size:14.500px;top:-1.800px">{}</div>

<div class="it" style="left:62.80px;letter-spacing:0.035px;">main*</div>
<div class="it" style="left:203.90px;transform:scaleX(0.9348);transform-origin:0 50%;">96</div>
<div class="it" style="left:244.70px;transform:scaleX(1.0547);transform-origin:0 50%;">0</div>
<div class="it" style="left:294.70px;transform:scaleX(1.0547);transform-origin:0 50%;">0</div>
<div class="it" style="left:322.30px;letter-spacing:-0.079px;">Git Graph</div>
<div class="it" style="left:1104.00px;letter-spacing:0.041px;">Michael Arnaldi, 2 months ago</div>
<div class="it" style="left:1325.80px;letter-spacing:-0.354px;">Ln 10, Col 3</div>
<div class="it" style="left:1423.00px;transform:scaleX(0.9023);transform-origin:0 50%;">Spaces: 2</div>
<div class="it" style="left:1504.10px;transform:scaleX(0.9224);transform-origin:0 50%;">UTF-8</div>
<div class="it" style="left:1563.30px;transform:scaleX(0.8475);transform-origin:0 50%;">CRLF</div>
<div class="it" style="left:1665.30px;transform:scaleX(0.9267);transform-origin:0 50%;">JavaScript</div>
</div>
</body>
</html>
